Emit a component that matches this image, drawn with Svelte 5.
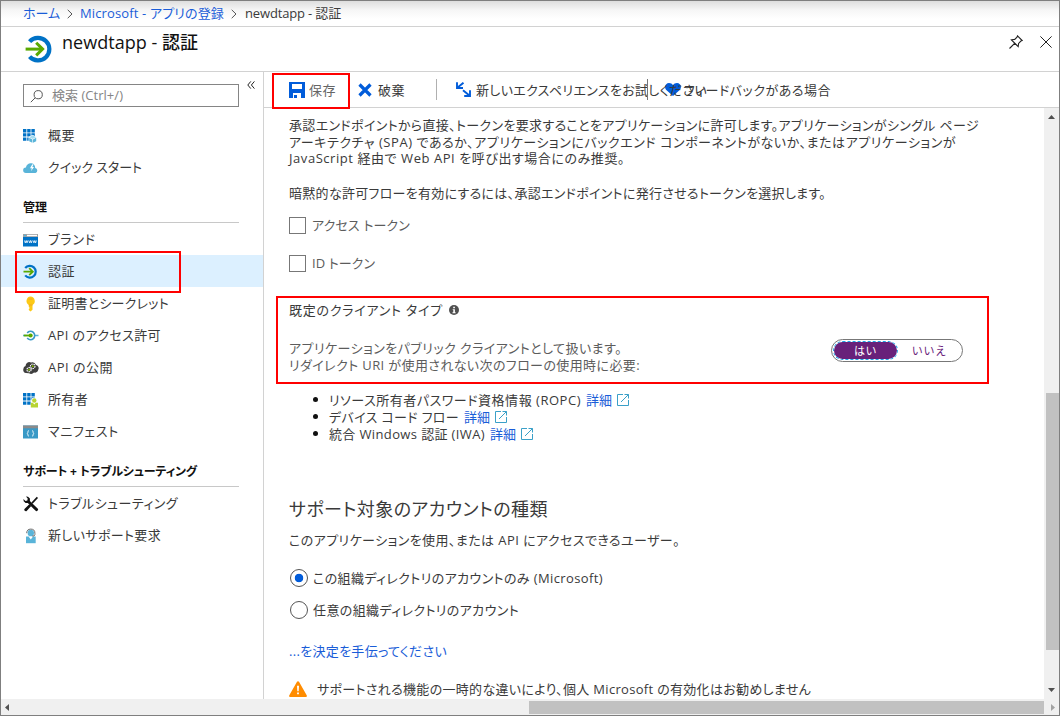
<script>
  // Spreads a label's letters so that it takes the given width.
  function fit(node, width) {
    const natural = node.getBoundingClientRect().width;
    const count = [...node.textContent].length;
    node.style.letterSpacing = `${(width - natural) / count}px`;
  }

  const overview = [
    { icon: 'grid', label: '概要', width: 27 },
    { icon: 'cloud', label: 'クイック スタート', width: 94 }
  ];
  const manage = [
    { icon: 'www', label: 'ブランド', width: 48 },
    { icon: 'auth', label: '認証', width: 27, active: true },
    { icon: 'key', label: '証明書とシークレット', width: 121 },
    { icon: 'api', label: 'API のアクセス許可', width: 113 },
    { icon: 'expose', label: 'API の公開', width: 65 },
    { icon: 'owners', label: '所有者', width: 40 },
    { icon: 'manifest', label: 'マニフェスト', width: 71 }
  ];
  const support = [
    { icon: 'tools', label: 'トラブルシューティング', width: 130 },
    { icon: 'person', label: '新しいサポート要求', width: 113 }
  ];
  const flows = [
    { label: 'リソース所有者パスワード資格情報 (ROPC)', width: 252 },
    { label: 'デバイス コード フロー', width: 130 },
    { label: '統合 Windows 認証 (IWA)', width: 156 }
  ];
</script>

{#snippet glyph(name)}
  <svg class="glyph" viewBox="0 0 16 16">
    {#if name === 'grid' || name === 'owners'}
      <g fill="#0072c6">
        <path d="M0 1h3.4v3.4H0zM4.2 1h3.4v3.4H4.2zM8.4 1h3.4v3.4H8.4zM0 5.2h3.4v3.4H0zM4.2 5.2h3.4v3.4H4.2zM8.4 5.2h3.4v3.4H8.4zM0 9.4h3.4v3.4H0zM4.2 9.4h3.4v3.4H4.2z" />
      </g>
      {#if name === 'grid'}
        <path d="M5.600 9l4-2.200 4 2.200v4.600l-4 2-4-2z" fill="#fff" />
        <path d="M6.200 9.200l3.500-1.900 3.500 1.900-3.500 1.800z" fill="#a6dcf0" />
        <path d="M6.200 9.700l3.200 1.700v3.400l-3.200-1.600zM13.200 9.700L10 11.400v3.400l3.200-1.600z" fill="#59b4d9" />
      {:else}
        <circle cx="11.3" cy="8.5" r="3" fill="#fff" />
        <circle cx="11.3" cy="8.5" r="2.2" fill="#b8d432" />
        <path d="M7.800 10.800h2l1.500 1.600 1.500-1.600H15v4.600H7.800z" fill="#b8d432" />
      {/if}
    {:else if name === 'cloud'}
      <path d="M3 13a2.800 2.800 0 0 1-.1-5.600C3.300 4.500 6 2.800 8.600 3.300c2.400.5 3.600 2.400 3.600 4.700A2.600 2.600 0 0 1 12.600 13z" fill="#59b4d9" />
      <path d="M9.300 4.200L7 8.300h1.800L8 11.300l3-4.200H9.300l1.200-2.600z" fill="#fff" />
    {:else if name === 'www'}
      <path d="M0 2h15v12.500H0z" fill="#0072c6" />
      <path d="M0 2h15v3H0z" fill="#a0a1a2" />
      <path d="M4 2.8h10v1.4H4z" fill="#fff" />
      <path d="M1 2.8h2v1.4H1z" fill="#59b4d9" />
      <path d="M1.5 8.5l.8 2.4.9-2.4.8 2.4.8-2.4M5.8 8.5l.8 2.4.9-2.4.8 2.4.8-2.4M10.1 8.5l.8 2.4.9-2.4.8 2.4.8-2.4" fill="none" stroke="#fff" stroke-width=".8" />
    {:else if name === 'auth'}
      <path d="M2.200 4a5.900 5.900 0 1 1 0 7.400" fill="none" stroke="#0072c6" stroke-width="2.200" />
      <path d="M.5 7.700h9M6.200 4.200L9.800 7.700l-3.600 3.500" fill="none" stroke="#59a900" stroke-width="1.800" />
    {:else if name === 'key'}
      <path d="M7.500.5a4.500 4.500 0 0 1 2 8.400v4.800l-2 1.900-1.700-1.700v-1l1-1-1-1V8.900A4.500 4.500 0 0 1 7.500.5z" fill="#fcc916" />
      <path d="M5.400 3h4.200M5.800 9h3.700" stroke="#f0a820" stroke-width="1" />
    {:else if name === 'api'}
      <path d="M0 7.500h3.500M12 7.500h3.500" stroke="#59b4d9" stroke-width="1.600" />
      <path d="M4.200 4.900a4.200 4.200 0 1 1 0 5.200" fill="none" stroke="#3999c6" stroke-width="1.600" />
      <path d="M.8 7.500h6" stroke="#59a900" stroke-width="1.800" />
      <circle cx="7.600" cy="7.500" r="2.100" fill="#59a900" />
    {:else if name === 'expose'}
      <path d="M3 13a3 3 0 0 1-2.600-4A3 3 0 0 1 2.600 6 3.600 3.600 0 0 1 8 2.600a4 4 0 0 1 5 2.300 3.300 3.300 0 0 1 2.300 4.700A3.600 3.600 0 0 1 11 12.500 4 4 0 0 1 6 13.200z" fill="#3e3e3e" />
      <circle cx="6" cy="9.7" r="2.1" fill="none" stroke="#fff" stroke-width="1.1" stroke-dasharray="1.4 .7" />
      <circle cx="9.700" cy="6.300" r="2.300" fill="none" stroke="#fff" stroke-width="1.1" stroke-dasharray="1.4 .7" />
      <circle cx="6" cy="9.7" r="1" fill="#7fba00" />
      <circle cx="9.700" cy="6.300" r="1" fill="#7fba00" />
    {:else if name === 'manifest'}
      <path d="M0 1.500h15v13H0z" fill="#3999c6" />
      <path d="M0 1.500h15v2.800H0z" fill="#8a8a8a" />
      <path d="M5.800 6.500c-1.300 0-.5 2.400-1.500 2.900 1 .5.2 2.900 1.500 2.900M9.200 6.500c1.300 0 .5 2.400 1.500 2.900-1 .5-.2 2.900-1.500 2.900" fill="none" stroke="#fff" stroke-width=".9" />
    {:else if name === 'tools'}
      <path d="M13.800 .8L15 2 9.600 7.700 8.400 6.600z" fill="#111" />
      <path d="M6.300 8.200l1.900 1.900-4.300 4.600a1.400 1.400 0 0 1-2.200-2z" fill="#111" />
      <path d="M2.900.4L5 .7l1.900 1.900v2.300l7.700 7.500a1.500 1.500 0 0 1-2.200 2.200L4.800 7H2.600L.7 5.200.4 2.900 2.500 5l1.900-.5.3-1.900z" fill="#111" />
    {:else if name === 'person'}
      <path d="M3 15.200V8.500h9.700v6.700z" fill="#59b4d9" />
      <path d="M5.600 8.400H10l-2.200 3.200z" fill="#fff" />
      <circle cx="7.800" cy="4.900" r="3.200" fill="#59b4d9" />
      <path d="M3.700 5.200a4.100 4.100 0 1 1 8.200 0v1.400a2 2 0 0 1-2.600 1.400" fill="none" stroke="#6b6b6b" stroke-width="1" />
    {/if}
  </svg>
{/snippet}

{#snippet menu(items)}
  <ul class="menu">
    {#each items as item}
      <li class:active={item.active}>
        {@render glyph(item.icon)}
        <span class="t" use:fit={item.width}>{item.label}</span>
        {#if item.active}<i class="mark mark-nav"></i>{/if}
      </li>
    {/each}
  </ul>
{/snippet}

<div class="window">
  <nav class="crumbs">
    <a class="t" use:fit={37}>ホーム</a>
    <svg viewBox="0 0 6 10"><path d="M.7.8L5 5 .7 9.2" /></svg>
    <a class="t" use:fit={144}>Microsoft - アプリの登録</a>
    <svg viewBox="0 0 6 10"><path d="M.7.8L5 5 .7 9.2" /></svg>
    <span class="t here" use:fit={96}>newdtapp - 認証</span>
  </nav>

  <header>
    <svg class="logo" viewBox="0 0 28 28">
      <path d="M4.6 6.6a11.3 11.3 0 1 1 0 15" fill="none" stroke="#0072c6" stroke-width="4.2" />
      <path d="M.6 14.1h16" stroke="#59a900" stroke-width="3" />
      <path d="M11.2 7.800l6.400 6.300-6.400 6.300" fill="none" stroke="#59a900" stroke-width="3" />
    </svg>
    <h1><span class="t" use:fit={136}>newdtapp - 認証</span></h1>
    <svg class="pin" viewBox="0 0 14 14"><path d="M8.5.8l4.700 4.700-1.300.5-2.300 2.400-.4 3.200-6.800-6.800 3.300-.4L8 2.100zM5.600 8.400L.5 13.500" /></svg>
    <svg class="close" viewBox="0 0 12 12"><path d="M.4.4l11.200 11.200M11.600.4L.4 11.600" /></svg>
  </header>

  <div class="body">
    <aside>
      <div class="find">
        <div class="search">
          <svg viewBox="0 0 14 14"><circle cx="8.200" cy="5.700" r="4.100" /><path d="M5.200 8.800L.8 13.200" /></svg>
          <span class="t" use:fit={71}>検索 (Ctrl+/)</span>
        </div>
        <svg class="fold" viewBox="0 0 8 8"><path d="M3.800.4L.8 4l3 3.600M7.400.4L4.400 4l3 3.600" /></svg>
      </div>
      {@render menu(overview)}
      <h2><span class="t" use:fit={24}>管理</span></h2>
      {@render menu(manage)}
      <h2><span class="t" use:fit={174}>サポート + トラブルシューティング</span></h2>
      {@render menu(support)}
    </aside>

    <main>
      <div class="toolbar">
        <button class="save">
          <svg viewBox="0 0 16 16"><path fill-rule="evenodd" d="M0 0h16v16H12v-5H4v5H0zM3 2v5h10V2zM5 13h3v3H5z" /></svg>
          <span class="t" use:fit={27}>保存</span>
          <i class="mark"></i>
        </button>
        <button class="discard">
          <svg viewBox="0 0 14 14"><path d="M1.5 1.5l11 11M12.5 1.5l-11 11" fill="none" stroke="#015cda" stroke-width="3.2" /></svg>
          <span class="t" use:fit={27}>破棄</span>
        </button>
        <i class="bar"></i>
        <button class="try">
          <svg viewBox="0 0 15 15"><path d="M1 .3V6h6M1.300 5.700L7.500.7M14 8.200V14H8.200M13.700 13.700L7 8.300" fill="none" stroke="#015cda" stroke-width="1.900" /></svg>
          <span class="t" use:fit={231}>新しいエクスペリエンスをお試しください</span>
        </button>
        <i class="bar over"></i>
        <button class="feedback">
          <svg viewBox="0 0 16 13"><path d="M8 13L1 6.800C-1.400 3.500 1 0 4 0c1.700 0 3.200.8 4 2.200C8.800.8 10.300 0 12 0c3 0 5.400 3.500 3 6.800z" /></svg>
          <span class="t" use:fit={147}>フィードバックがある場合</span>
        </button>
      </div>

      <div class="view">
        <div class="page">
          <p class="intro">
            <span class="t" use:fit={690}>承認エンドポイントから直接、トークンを要求することをアプリケーションに許可します。アプリケーションがシングル ページ</span><br />
            <span class="t" use:fit={667}>アーキテクチャ (SPA) であるか、アプリケーションにバックエンド コンポーネントがないか、またはアプリケーションが</span><br />
            <span class="t" use:fit={336}>JavaScript 経由で Web API を呼び出す場合にのみ推奨。</span>
          </p>
          <p class="pick"><span class="t" use:fit={537}>暗黙的な許可フローを有効にするには、承認エンドポイントに発行させるトークンを選択します。</span></p>
          <label class="check"><i></i><span class="t" use:fit={98}>アクセス トークン</span></label>
          <label class="check"><i></i><span class="t" use:fit={63}>ID トークン</span></label>

          <section class="client">
            <i class="mark mark-client"></i>
            <h3>
              <span class="t" use:fit={154}>既定のクライアント タイプ</span>
              <svg viewBox="0 0 10 10"><circle cx="5" cy="5" r="5" fill="#505050" /><path d="M4.200 1.800h1.700v1.500H4.200zM3.700 4.200h2.200v3h.7v1H3.500v-1h.8V5.100h-.6z" fill="#fff" /></svg>
            </h3>
            <div class="row">
              <p>
                <span class="t" use:fit={333}>アプリケーションをパブリック クライアントとして扱います。</span><br />
                <span class="t" use:fit={351}>リダイレクト URI が使用されない次のフローの使用時に必要:</span>
              </p>
              <div class="toggle">
                <span class="on"><b class="t" use:fit={23}>はい</b></span>
                <span class="off"><b class="t" use:fit={35}>いいえ</b></span>
              </div>
            </div>
          </section>

          <ul class="flows">
            {#each flows as flow}
              <li>
                <span class="t" use:fit={flow.width}>{flow.label}</span>
                <a class="t" use:fit={26}>詳細</a>
                <svg viewBox="0 0 12 12"><path d="M6 .5H.5v11h11V6M7.500.5h4v4M11.500.5L4 8" /></svg>
              </li>
            {/each}
          </ul>

          <h4><span class="t" use:fit={259}>サポート対象のアカウントの種類</span></h4>
          <p class="who"><span class="t" use:fit={391}>このアプリケーションを使用、または API にアクセスできるユーザー。</span></p>
          <label class="radio chosen"><i></i><span class="t" use:fit={290}>この組織ディレクトリのアカウントのみ (Microsoft)</span></label>
          <label class="radio"><i></i><span class="t" use:fit={206}>任意の組織ディレクトリのアカウント</span></label>
          <p class="help"><a class="t" use:fit={158}>...を決定を手伝ってください</a></p>
          <p class="warn">
            <svg viewBox="0 0 18 16"><path d="M9 .2c.5 0 .8.200 1 .6l7.700 13.500c.4.800 0 1.700-1 1.700H1.300c-1 0-1.400-.900-1-1.700L8 .8c.2-.400.500-.600 1-.600z" fill="#ff8c00" /><path d="M8 4.800h2l-.3 5.500H8.300zM8.100 11.500h1.800v1.800H8.100z" fill="#fff" /></svg>
            <span class="t" use:fit={494}>サポートされる機能の一時的な違いにより、個人 Microsoft の有効化はお勧めしません</span>
          </p>
        </div>
        <div class="vbar">
          <svg viewBox="0 0 7 4"><path d="M0 4L3.500 0 7 4z" /></svg>
          <i></i>
          <svg viewBox="0 0 7 4"><path d="M0 0l3.500 4L7 0z" /></svg>
        </div>
      </div>
    </main>
  </div>
  <div class="hbar">
    <svg viewBox="0 0 4 7"><path d="M4 0L0 3.500 4 7z" fill="#505050" /></svg>
    <i></i>
    <svg viewBox="0 0 4 7"><path d="M0 0l4 3.500L0 7z" fill="#a3a3a3" /></svg>
  </div>
</div>

<style>
  :global(body) { margin: 0; background: #fff; }
  * { box-sizing: border-box; }
  .window {
    width: 1060px; height: 716px; border: 1px solid #7f7f7f; overflow: hidden;
    display: flex; flex-direction: column; background: #fff; color: #3a3a3a;
    font: 400 13px/16px "Open Sans", "Noto Sans CJK JP", sans-serif;
    font-feature-settings: "palt";
  }
  h1, h2, h3, h4, p, ul { margin: 0; padding: 0; font-weight: 400; font-size: 13px; }
  ul { list-style: none; }
  svg { display: block; flex: none; }
  i { display: block; flex: none; }
  a { color: #1a5dd8; }
  .t { display: inline-block; white-space: pre; }

  .crumbs {
    height: 26px; flex: none; padding-left: 22px; display: flex; align-items: center;
    border-bottom: 1px solid #d2d2d2; background: linear-gradient(#dedede, #f6f6f6 9px, #fff 18px);
  }
  .crumbs svg { width: 6px; height: 10px; margin: 0 7px; fill: none; stroke: #555; }
  .crumbs .t, .search .t, .menu .t { margin-bottom: 2px; }
  .crumbs .here { margin-left: 1px; }
  header {
    height: 45px; flex: none; display: flex; align-items: flex-start;
    border-bottom: 1px solid #d2d2d2; padding: 6px 7px 0 24px;
  }
  .logo { width: 28px; height: 28px; margin-top: 2px; }
  h1 { flex: 1; margin-left: 9px; font-size: 18px; line-height: 18px; font-weight: 500; color: #111; }
  .pin { width: 14px; height: 14px; margin: 2px 17px 0 0; fill: none; stroke: #222; stroke-width: 1.100; }
  .close { width: 12px; height: 12px; margin-top: 3px; stroke: #222; }

  .body { flex: 1; min-height: 0; display: flex; }
  aside { width: 263px; flex: none; border-right: 1px solid #d2d2d2; }
  .find { display: flex; padding: 12px 0 0 22px; height: 47px; }
  .search {
    width: 216px; height: 23px; border: 1px solid #858585; display: flex;
    align-items: center; color: #858585; padding-left: 6px;
  }
  .search svg { width: 14px; height: 14px; margin-right: 8px; fill: none; stroke: #555; }
  .fold { width: 8px; height: 8px; margin: -3px 0 0 8px; fill: none; stroke: #222; }
  .menu li { position: relative; height: 32px; display: flex; align-items: center; padding: 1px 0 0 22px; }
  .menu .active { background: #dcf0ff; }
  .glyph { width: 16px; height: 16px; margin-right: 9px; }
  h2 {
    height: 40px; margin: 0 24px 0 22px; padding-top: 17px; line-height: 16px;
    font-size: 12px; font-weight: 700; color: #111; border-bottom: 1px solid #c8c8c8;
  }
  .mark { position: absolute; border: 2px solid #f00; pointer-events: none; }
  .mark-nav { left: 14px; top: -4px; width: 166px; height: 42px; }

  main { flex: 1; min-width: 0; display: flex; flex-direction: column; }
  .toolbar { height: 36px; flex: none; border-bottom: 1px solid #d2d2d2; display: flex; align-items: center; }
  button {
    border: 0; padding: 0; background: none; font: inherit; font-feature-settings: inherit;
    color: #3a3a3a; display: flex; align-items: center; flex: none; position: relative; height: 36px;
  }
  button svg { fill: #015cda; }
  .save { width: 86px; padding-left: 25px; color: #666; }
  .save svg { width: 16px; height: 16px; margin-right: 4px; }
  .save .mark { left: 8px; top: 1px; width: 78px; height: 36px; }
  .discard { width: 86px; padding-left: 8px; }
  .discard svg { width: 14px; height: 14px; margin-right: 6px; }
  .bar { width: 1px; height: 21px; background: #b0b0b0; }
  .try { width: 210px; padding-left: 19px; z-index: 1; }
  .try svg { width: 15px; height: 15px; margin-right: 5px; }
  .over { z-index: 2; background: #777; }
  .feedback { padding-left: 17px; }
  .feedback svg { width: 16px; height: 13px; margin-right: 3px; }

  .view { flex: 1; min-height: 0; display: flex; }
  .page { width: 780px; flex: none; overflow: hidden; padding: 9px 0 0 25px; position: relative; }
  .intro { line-height: 16.500px; height: 50px; }
  .pick { margin: 18px 0 8px; height: 16px; }
  .check { display: flex; align-items: center; height: 38px; margin: -3px 0 3px; color: #5c5c5c; }
  .check i { width: 17px; height: 17px; border: 1px solid #777; margin-right: 6px; }
  .client { position: relative; margin-top: 15px; height: 88px; color: #5c5c5c; }
  .mark-client { left: -13px; top: -1px; width: 713px; height: 88px; }
  h3 { display: flex; align-items: center; padding-top: 4px; line-height: 18px; color: #3a3a3a; }
  h3 svg { width: 10px; height: 10px; margin-left: 6px; }
  .row { display: flex; padding-top: 21px; }
  .row p { width: 542px; line-height: 17px; }
  .toggle {
    width: 132px; height: 23px; margin-top: -1px; border: 1px solid #777; border-radius: 12px;
    display: flex; padding: 1px; font-size: 11px; line-height: 17px; text-align: center;
  }
  .toggle b { font-weight: 400; }
  .on {
    width: 65px; flex: none; height: 19px; color: #fff; border: 1px dashed #1ea5e6; border-radius: 10px;
    background: #68217a; background-clip: padding-box;
  }
  .off { flex: 1; line-height: 19px; color: #68217a; }
  .flows { padding: 6px 0 0 24px; }
  .flows li { height: 17px; display: flex; align-items: center; }
  .flows li::before { content: ""; width: 5px; height: 5px; border-radius: 50%; background: #111; margin-right: 11px; }
  .flows a { margin-left: 5px; }
  .flows svg { width: 12px; height: 12px; margin-left: 5px; fill: none; stroke: #3aa0c8; }
  h4 { margin-top: 55px; height: 24px; line-height: 24px; font-size: 18px; }
  .who { margin-top: 11px; height: 16px; }
  .radio { display: flex; align-items: center; height: 32px; }
  .who + .radio { margin-top: 14px; }
  .radio i { width: 18px; height: 18px; margin: 0 5px 0 1px; border: 1px solid #555; border-radius: 50%; }
  .chosen i { background: radial-gradient(circle, #015cda 4px, #fff 4.600px); }
  .help { margin-top: 17px; height: 16px; }
  .warn { margin-top: 21px; display: flex; align-items: center; height: 18px; }
  .warn svg { width: 18px; height: 16px; margin-right: 10px; }

  .vbar { flex: 1; background: #f0f0f0; display: flex; flex-direction: column; align-items: flex-end; }
  .vbar svg { width: 7px; height: 4px; margin: 7px 4px 0; fill: #505050; }
  .vbar i { width: 13px; height: 257px; margin-top: 274px; background: #c1c1c1; }
  .vbar i + svg { margin-top: 38px; }
  .hbar { height: 16px; flex: none; background: #f0f0f0; display: flex; align-items: center; }
  .hbar svg { width: 4px; height: 7px; margin-left: 4px; }
  .hbar i { width: 515px; height: 13px; margin-left: 520px; background: #c1c1c1; }
  .hbar i + svg { margin-left: 7px; }
</style>
